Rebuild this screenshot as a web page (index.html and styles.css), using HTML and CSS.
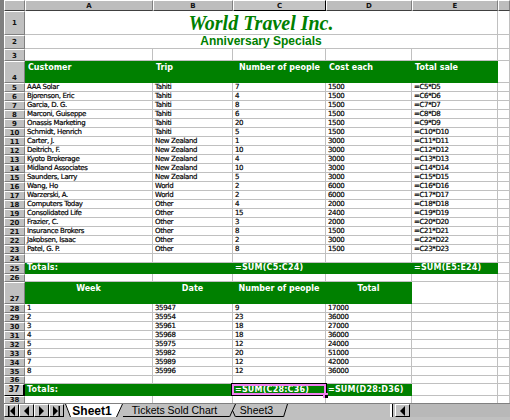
FILE: index.html
```html
<!DOCTYPE html>
<html lang="en">
<head>
<meta charset="utf-8">
<title>World Travel Inc.</title>
<link rel="stylesheet" href="styles.css">
</head>
<body>
<div class="app">
<div class="sheet">
<table class="grid">
<colgroup><col class="c-h"><col class="c-a"><col class="c-b"><col class="c-c"><col class="c-d"><col class="c-e"><col class="c-f"></colgroup>
<thead>
<tr class="r-head"><th class="corner"></th><th>A</th><th>B</th><th class="active-col">C</th><th>D</th><th>E</th><th></th></tr>
</thead>
<tbody>
<tr class="r-1"><th>1</th><td colspan="5" class="title">World Travel Inc.</td><td></td></tr>
<tr class="r-2"><th>2</th><td colspan="5" class="subtitle">Anniversary Specials</td><td></td></tr>
<tr class="r-3"><th class="low">3</th><td></td><td></td><td></td><td></td><td></td><td></td></tr>
<tr class="r-4"><th class="low">4</th><td class="band">Customer</td><td class="band">Trip</td><td class="band in-c">Number of people</td><td class="band">Cost each</td><td class="band">Total sale</td><td></td></tr>
<tr><th>5</th><td>AAA Solar</td><td>Tahiti</td><td>7</td><td>1500</td><td>=C5*D5</td><td></td></tr>
<tr><th>6</th><td>Bjorenson, Eric</td><td>Tahiti</td><td>4</td><td>1500</td><td>=C6*D6</td><td></td></tr>
<tr><th>7</th><td>Garcia, D. G.</td><td>Tahiti</td><td>8</td><td>1500</td><td>=C7*D7</td><td></td></tr>
<tr><th>8</th><td>Marconi, Guiseppe</td><td>Tahiti</td><td>6</td><td>1500</td><td>=C8*D8</td><td></td></tr>
<tr><th>9</th><td>Onassis Marketing</td><td>Tahiti</td><td>20</td><td>1500</td><td>=C9*D9</td><td></td></tr>
<tr><th>10</th><td>Schmidt, Henrich</td><td>Tahiti</td><td>5</td><td>1500</td><td>=C10*D10</td><td></td></tr>
<tr><th>11</th><td>Carter, J.</td><td>New Zealand</td><td>1</td><td>3000</td><td>=C11*D11</td><td></td></tr>
<tr><th>12</th><td>Deitrich, F.</td><td>New Zealand</td><td>10</td><td>3000</td><td>=C12*D12</td><td></td></tr>
<tr><th>13</th><td>Kyoto Brokerage</td><td>New Zealand</td><td>4</td><td>3000</td><td>=C13*D13</td><td></td></tr>
<tr><th>14</th><td>Midland Associates</td><td>New Zealand</td><td>10</td><td>3000</td><td>=C14*D14</td><td></td></tr>
<tr><th>15</th><td>Saunders, Larry</td><td>New Zealand</td><td>5</td><td>3000</td><td>=C15*D15</td><td></td></tr>
<tr><th>16</th><td>Wang, Ho</td><td>World</td><td>2</td><td>6000</td><td>=C16*D16</td><td></td></tr>
<tr><th>17</th><td>Warzerski, A.</td><td>World</td><td>2</td><td>6000</td><td>=C17*D17</td><td></td></tr>
<tr><th>18</th><td>Computers Today</td><td>Other</td><td>4</td><td>2000</td><td>=C18*D18</td><td></td></tr>
<tr><th>19</th><td>Consolidated Life</td><td>Other</td><td>15</td><td>2400</td><td>=C19*D19</td><td></td></tr>
<tr><th>20</th><td>Frazier, C.</td><td>Other</td><td>3</td><td>2000</td><td>=C20*D20</td><td></td></tr>
<tr><th>21</th><td>Insurance Brokers</td><td>Other</td><td>8</td><td>1500</td><td>=C21*D21</td><td></td></tr>
<tr><th>22</th><td>Jakobsen, Isaac</td><td>Other</td><td>2</td><td>3000</td><td>=C22*D22</td><td></td></tr>
<tr><th>23</th><td>Patel, G. P.</td><td>Other</td><td>8</td><td>1500</td><td>=C23*D23</td><td></td></tr>
<tr><th>24</th><td></td><td></td><td></td><td></td><td></td><td></td></tr>
<tr class="r-total"><th>25</th><td class="total">Totals:</td><td class="total"></td><td class="total">=SUM(C5:C24)</td><td class="total"></td><td class="total">=SUM(E5:E24)</td><td></td></tr>
<tr class="r-short"><th>26</th><td></td><td></td><td></td><td></td><td></td><td></td></tr>
<tr class="r-4b"><th class="low">27</th><td class="band center">Week</td><td class="band center">Date</td><td class="band center">Number of people</td><td class="band center">Total</td><td></td><td></td></tr>
<tr><th>28</th><td>1</td><td>35947</td><td>9</td><td>17000</td><td></td><td></td></tr>
<tr><th>29</th><td>2</td><td>35954</td><td>23</td><td>36000</td><td></td><td></td></tr>
<tr><th>30</th><td>3</td><td>35961</td><td>18</td><td>27000</td><td></td><td></td></tr>
<tr><th>31</th><td>4</td><td>35968</td><td>18</td><td>36000</td><td></td><td></td></tr>
<tr><th>32</th><td>5</td><td>35975</td><td>12</td><td>24000</td><td></td><td></td></tr>
<tr><th>33</th><td>6</td><td>35982</td><td>20</td><td>51000</td><td></td><td></td></tr>
<tr><th>34</th><td>7</td><td>35989</td><td>12</td><td>42000</td><td></td><td></td></tr>
<tr><th>35</th><td>8</td><td>35996</td><td>12</td><td>36000</td><td></td><td></td></tr>
<tr class="r-short"><th>36</th><td></td><td></td><td></td><td></td><td></td><td></td></tr>
<tr class="r-total2"><th class="active-row">37</th><td class="total">Totals:</td><td class="total"></td><td class="total selected">=SUM(C28:C36)<span class="sel-frame"></span><span class="sel-handle"></span></td><td class="total">=SUM(D28:D36)</td><td></td><td></td></tr>
<tr class="r-short"><th>38</th><td></td><td></td><td></td><td></td><td></td><td></td></tr>
</tbody>
</table>
</div>
<div class="tabbar">
<div class="nav">
<button class="nav-btn"><svg width="9" height="10" viewBox="0 0 9 10"><path d="M1 0h1.500v10H1zM8 0v10L3 5z"/></svg></button>
<button class="nav-btn"><svg width="9" height="10" viewBox="0 0 9 10"><path d="M7 0v10L2 5z"/></svg></button>
<button class="nav-btn"><svg width="9" height="10" viewBox="0 0 9 10"><path d="M2 0v10l5-5z"/></svg></button>
<button class="nav-btn"><svg width="9" height="10" viewBox="0 0 9 10"><path d="M1 0v10l5-5zM6.500 0H8v10H6.500z"/></svg></button>
</div>
<svg class="slant s-a" width="8" height="13" viewBox="0 0 8 13"><path class="fill-w" d="M1 0h7v13H6z"/><path class="ln" d="M1.500 0L6.500 13"/></svg>
<div class="tab tab-on">Sheet1</div>
<svg class="slant s-b" width="7" height="13" viewBox="0 0 7 13"><path class="fill-w" d="M0 0h6.500L.5 13H0z"/><path class="ln" d="M6.500 0L.5 13"/></svg>
<div class="tab tab-t">Tickets Sold Chart</div>
<svg class="slant s-c" width="7" height="13" viewBox="0 0 7 13"><path class="ln" d="M6.500 0L.5 13"/><path class="ln" d="M3.500 6.500L6.500 13"/></svg>
<div class="tab tab-3">Sheet3</div>
<svg class="slant s-d" width="5" height="13" viewBox="0 0 5 13"><path class="ln" d="M4.500 0L.5 13"/></svg>
<div class="spacer"></div>
<div class="splitter"></div>
<button class="nav-btn scroll"><svg width="9" height="10" viewBox="0 0 9 10"><path d="M7 0v10L2 5z"/></svg></button>
<div class="track"></div>
</div>
</div>
</body>
</html>
```
FILE: styles.css
```css
* { box-sizing: border-box; }
html, body { margin: 0; padding: 0; }
body { background: #c0c0c0; font-family: "DejaVu Sans", sans-serif; overflow: hidden; }
.app { width: 510px; height: 420px; display: flex; flex-direction: column; overflow: hidden; }
.sheet { height: 403px; flex: none; overflow: hidden; background: #fff; border-left: 4px solid #808080; }

.grid { border-collapse: separate; border-spacing: 0; table-layout: fixed; width: 506px; font-size: 7px; line-height: 7px; color: #000; -webkit-text-stroke: .2px #000; letter-spacing: -.35px; }
.c-h { width: 21px; } .c-a { width: 128px; } .c-b { width: 80px; } .c-c { width: 93px; }
.c-d { width: 86px; } .c-e { width: 86px; } .c-f { width: 12px; }

.grid tr { height: 9px; }
.grid td, .grid th { padding: 0; overflow: hidden; white-space: nowrap; }
.grid td { border-right: 1px solid #c0c0c0; border-bottom: 1px solid #c0c0c0; padding-left: 2px; text-align: left; background: #fff; vertical-align: middle; }
.grid th { background: #c0c0c0; border-top: 1px solid #fff; border-left: 1px solid #fff; border-right: 1px solid #808080; border-bottom: 1px solid #808080; text-align: center; font-weight: 700; font-size: 7px; line-height: 6px; color: #111; letter-spacing: 0; -webkit-text-stroke: 0; }
.grid th.low { vertical-align: bottom; padding-bottom: 1px; }

.grid .r-head { height: 11px; }
.r-head th { background: #bdbdbd; border-bottom-color: #404040; }
.corner { background: #c0c0c0; }
.grid .active-col { border-right-color: #000; border-bottom-color: #000; background: #c4c4c4; }
.grid .active-row { background: #c8c8c8; border-right: 2px solid #000; border-bottom-color: #000; font-size: 8px; }

.grid .r-1 { height: 24px; }
.grid .r-2 { height: 14px; }
.grid .r-3 { height: 12px; }
.grid .r-4 { height: 22px; }
.grid .r-4b { height: 22px; }
.grid .r-total { height: 11px; }
.grid .r-total2 { height: 12px; }
.grid .r-short { height: 8px; }

.grid .title { text-align: center; font-family: "Liberation Serif", serif; font-style: italic; font-weight: 700; font-size: 20px; line-height: 22px; letter-spacing: 0; color: #008000; padding-left: 0; -webkit-text-stroke: 0; }
.grid .subtitle { text-align: center; font-family: "Liberation Sans", sans-serif; font-weight: 700; font-size: 12px; line-height: 13px; letter-spacing: 0; color: #008000; padding-left: 0; -webkit-text-stroke: 0; }

.grid td.band { background: #008000; border-color: #008000; color: #fff; font-weight: 700; font-size: 8px; line-height: 10px; vertical-align: top; padding-top: 2px; padding-left: 3px; letter-spacing: 0; -webkit-text-stroke: 0; }
.grid td.in-c { padding-left: 6px; }
.grid td.center { text-align: center; padding-left: 0; }
.grid td.total { background: #008000; border-color: #008000; color: #fff; font-weight: 700; font-size: 8px; line-height: 10px; letter-spacing: .2px; -webkit-text-stroke: 0; }

.grid td.selected { position: relative; overflow: visible; }
.sel-frame { position: absolute; left: -2px; right: -2px; top: -1px; bottom: -1px; border: 1px solid #000; box-shadow: inset 0 0 0 2px #f080f0; }
.sel-handle { position: absolute; right: -3px; bottom: -3px; width: 5px; height: 5px; background: #000; box-shadow: inset 2px 2px 0 #f080f0; }

.tabbar { height: 17px; flex: none; display: flex; align-items: flex-start; background: #c0c0c0; border-top: 1px solid #808080; border-left: 4px solid #808080; font-family: "Liberation Sans", sans-serif; font-size: 12px; }
.nav { display: flex; height: 13px; width: 60px; flex: none; }
.nav-btn { flex: 1; height: 13px; padding: 0; margin: 0; background: #c0c0c0; border: 1px solid; border-color: #fff #000 #000 #fff; display: flex; align-items: center; justify-content: center; }
.tab { height: 13px; flex: none; display: flex; align-items: center; justify-content: center; color: #000; border-bottom: 1px solid #000; white-space: nowrap; }
.tab-on { width: 44px; background: #fff; font-weight: 700; border-bottom: none; padding-right: 4px; }
.tab-t { width: 106px; padding-right: 3px; font-size: 10.500px; }
.tab-3 { width: 47px; padding-right: 6px; font-size: 10.500px; }
.slant { flex: none; display: block; }
.fill-w { fill: #fff; }
.ln { stroke: #000; stroke-width: 1; fill: none; }
.spacer { flex: 1; height: 13px; }
.splitter { width: 3px; height: 13px; margin-right: 2px; flex: none; background: #fff; border-right: 1px solid #000; }
.nav-btn.scroll { flex: none; width: 15px; }
.track { width: 100px; height: 13px; flex: none; background: #b8b8b8; }
```
